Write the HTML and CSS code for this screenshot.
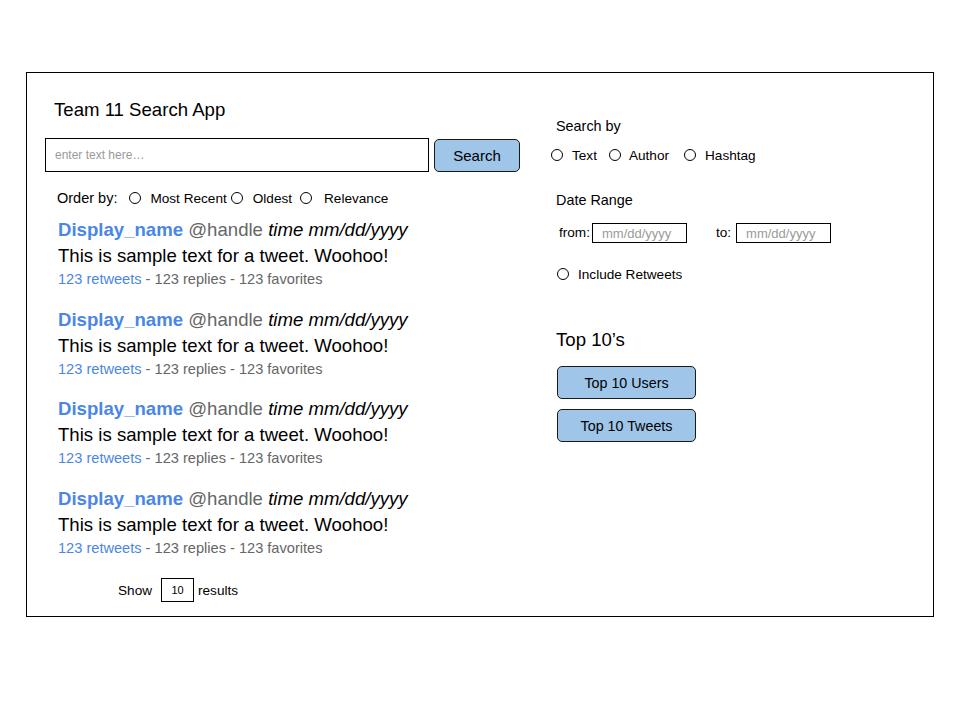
FILE: index.html
```html
<!DOCTYPE html>
<html>
<head>
<meta charset="utf-8">
<link rel="stylesheet" href="styles.css">
</head>
<body>
<div class="page">
  <div class="frame">
    <div class="left">
      <div class="title">Team 11 Search App</div>
      <div class="search-row">
        <div class="search-input">enter text here…</div>
        <div class="btn search-btn">Search</div>
      </div>
      <div class="order-row">
        <span class="order-label">Order by:</span>
        <span class="radio"></span><span class="opt">Most Recent</span>
        <span class="radio r-old"></span><span class="opt">Oldest</span>
        <span class="radio r-rel"></span><span class="opt o-rel">Relevance</span>
      </div>
      <div class="tweets">
        <div class="tweet">
          <div class="t-head"><span class="name">Display_name</span> <span class="handle">@handle</span> <span class="time">time mm/dd/yyyy</span></div>
          <div class="t-text">This is sample text for a tweet. Woohoo!</div>
          <div class="t-meta"><span class="rt">123 retweets</span> - 123 replies - 123 favorites</div>
        </div>
        <div class="tweet">
          <div class="t-head"><span class="name">Display_name</span> <span class="handle">@handle</span> <span class="time">time mm/dd/yyyy</span></div>
          <div class="t-text">This is sample text for a tweet. Woohoo!</div>
          <div class="t-meta"><span class="rt">123 retweets</span> - 123 replies - 123 favorites</div>
        </div>
        <div class="tweet">
          <div class="t-head"><span class="name">Display_name</span> <span class="handle">@handle</span> <span class="time">time mm/dd/yyyy</span></div>
          <div class="t-text">This is sample text for a tweet. Woohoo!</div>
          <div class="t-meta"><span class="rt">123 retweets</span> - 123 replies - 123 favorites</div>
        </div>
        <div class="tweet">
          <div class="t-head"><span class="name">Display_name</span> <span class="handle">@handle</span> <span class="time">time mm/dd/yyyy</span></div>
          <div class="t-text">This is sample text for a tweet. Woohoo!</div>
          <div class="t-meta"><span class="rt">123 retweets</span> - 123 replies - 123 favorites</div>
        </div>
      </div>
      <div class="show-row">
        <span>Show</span>
        <span class="show-box">10</span>
        <span>results</span>
      </div>
    </div>
    <div class="right">
      <div class="label">Search by</div>
      <div class="by-row">
        <span class="radio"></span><span class="opt">Text</span>
        <span class="radio r-author"></span><span class="opt">Author</span>
        <span class="radio r-hash"></span><span class="opt">Hashtag</span>
      </div>
      <div class="label date-label">Date Range</div>
      <div class="date-row">
        <span class="from">from:</span>
        <span class="date-box">mm/dd/yyyy</span>
        <span class="to">to:</span>
        <span class="date-box">mm/dd/yyyy</span>
      </div>
      <div class="rt-row">
        <span class="radio"></span><span class="opt">Include Retweets</span>
      </div>
      <div class="top-title">Top 10’s</div>
      <div class="btn top-btn">Top 10 Users</div>
      <div class="btn top-btn second">Top 10 Tweets</div>
    </div>
  </div>
</div>
</body>
</html>
```

FILE: styles.css
```css
* { box-sizing: border-box; }
html, body { margin: 0; padding: 0; background: #fff; }
body {
  font-family: "Liberation Sans", Arial, sans-serif;
  color: #000;
  width: 960px;
  height: 720px;
  overflow: hidden;
}
.page { padding: 72px 0 0 26px; }
.frame {
  width: 908px;
  height: 545px;
  border: 1px solid #000;
  display: grid;
  grid-template-columns: 475px 1fr;
  column-gap: 31px;
  padding-left: 18px;
  align-items: start;
}
.left { padding-top: 26px; }
.right { padding-top: 44px; }

.title { font-size: 18.6px; line-height: 22px; margin-left: 9px; }

.search-row { display: flex; align-items: flex-start; margin-top: 17px; }
.search-input {
  width: 384px; height: 34px;
  border: 1px solid #000;
  font-size: 12px; color: #9a9a9a;
  padding-left: 9px;
  display: flex; align-items: center;
}
.btn {
  background: #9fc5e8;
  border: 1px solid #1a1a1a;
  border-radius: 5px;
  display: flex; align-items: center; justify-content: center;
  color: #000;
}
.search-btn { width: 86px; height: 33px; margin-left: 5px; margin-top: 1px; font-size: 15px; }

.radio {
  display: inline-block;
  width: 12px; height: 12px;
  border: 1px solid #000;
  border-radius: 50%;
  flex: none;
}
.opt { font-size: 13.6px; margin-left: 9px; white-space: nowrap; }

.order-row {
  display: flex; align-items: center;
  margin-top: 17px; margin-left: 12px;
  height: 18px;
}
.order-label { font-size: 14.5px; margin-right: 12px; }
.r-old { margin-left: 4px; }
.r-rel { margin-left: 8px; }
.order-row .r-old + .opt { margin-left: 10px; }
.order-row .r-rel + .opt { margin-left: 12px; }

.tweets { margin-top: 10px; margin-left: 13px; display: flex; flex-direction: column; gap: 17.7px; }
.t-head { font-size: 18.6px; line-height: 26px; white-space: nowrap; }
.name { color: #4a86e8; font-weight: bold; }
.handle { color: #666; }
.time { font-style: italic; }
.t-text { font-size: 18.6px; line-height: 26px; }
.t-meta { font-size: 14.6px; line-height: 20px; color: #666; }
.rt { color: #4a86e8; }

.show-row {
  display: flex; align-items: center;
  margin-top: 20px; margin-left: 73px;
  font-size: 13.6px; height: 24px;
}
.show-box {
  width: 33px; height: 24px;
  border: 1px solid #000;
  margin: 0 4px 0 9px;
  font-size: 11px;
  display: flex; align-items: center; justify-content: center;
}

.label { font-size: 14.4px; line-height: 18px; margin-left: 5px; }
.by-row { display: flex; align-items: center; height: 18px; margin-top: 11px; }
.r-author { margin-left: 12px; }
.r-hash { margin-left: 15px; }
.by-row .r-author + .opt { margin-left: 8px; }
.date-label { margin-top: 27px; }
.date-row { display: flex; align-items: center; margin-top: 14px; margin-left: 8px; font-size: 13.6px; height: 20px; }
.from { margin-right: 2px; margin-top: -2px; }
.date-box {
  width: 95px; height: 20px;
  border: 1px solid #000;
  color: #9a9a9a;
  font-size: 13px;
  padding-left: 9px;
  display: flex; align-items: center;
}
.to { margin-left: 29px; margin-right: 5px; margin-top: -2px; }
.rt-row { display: flex; align-items: center; height: 18px; margin-top: 22px; margin-left: 6px; }
.top-title { font-size: 18.6px; line-height: 22px; margin-top: 46px; margin-left: 5px; }
.top-btn { width: 139px; height: 33px; margin-left: 6px; margin-top: 15px; font-size: 14.3px; }
.top-btn.second { margin-top: 10px; }
```
